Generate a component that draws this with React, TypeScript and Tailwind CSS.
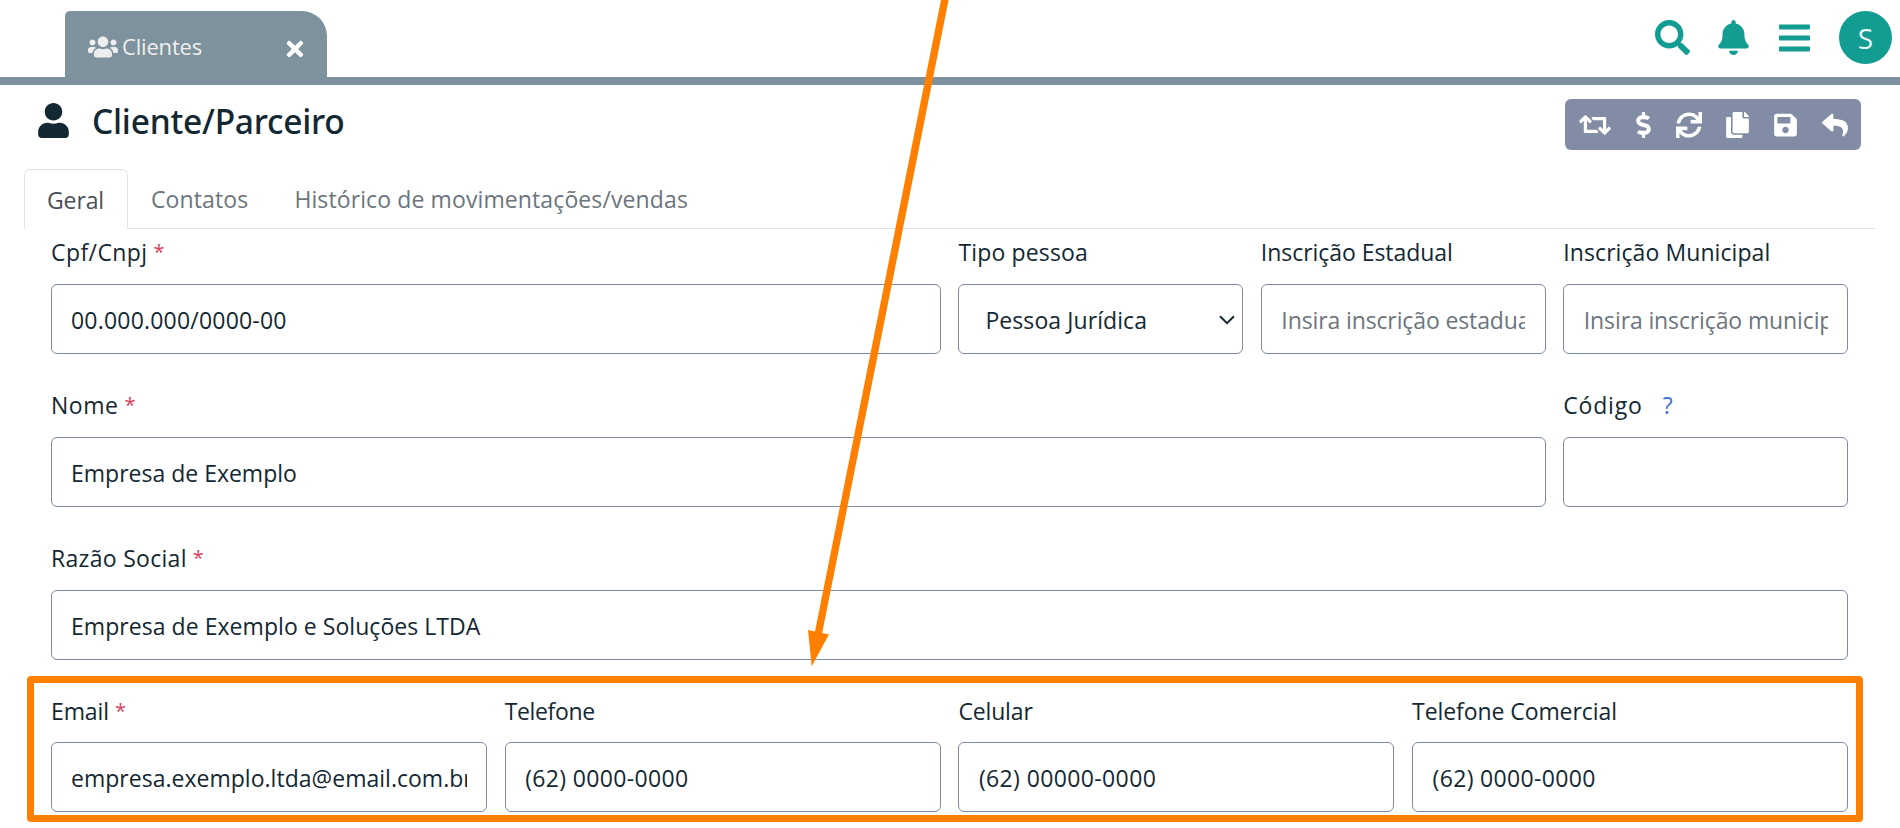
import React from "react";
import {
  FaBars,
  FaBell,
  FaCopy,
  FaDollarSign,
  FaReply,
  FaRetweet,
  FaSave,
  FaSearch,
  FaSync,
  FaTimes,
  FaUser,
  FaUsers,
} from "react-icons/fa";

const box =
  "block h-[70px] w-full rounded-md border border-[#7f8ba5] bg-white pt-[2px] text-[23px] text-[#142833] outline-none placeholder:text-[#6c757d] placeholder:opacity-100";

function Field({
  label,
  labelClass,
  required,
  help,
  span,
  last,
  children,
}: {
  label: string;
  labelClass: string;
  required?: boolean;
  help?: boolean;
  span: string;
  last?: boolean;
  children: React.ReactNode;
}) {
  return (
    <div className={`flex min-w-0 flex-col ${last ? "gap-[13px]" : "gap-[14px]"} ${span}`}>
      <label className="flex h-9 items-center whitespace-pre text-[23px] leading-9">
        <span className={labelClass}>{label}</span>
        {required && <span className="ml-[6px] text-[20px] text-[#dc3c5c]">*</span>}
        {help && <span className="ml-[20px] text-[#3f6fd9]">?</span>}
      </label>
      {children}
    </div>
  );
}

function Header() {
  return (
    <header className="flex h-[85px] justify-between border-b-8 border-[#7e929d]">
      <div className="ml-[65px] mt-[11px] flex h-[66px] w-[262px] items-center rounded-tl-[5px] rounded-tr-[25px] bg-[#7e929d] pl-[23px] pr-[20px] text-[#eeeeee]">
        <FaUsers className="mt-[5px] h-6 w-[30px] shrink-0" />
        <span className="ml-[4px] mt-[4px] text-[22px] leading-8 tracking-[-0.18px]">Clientes</span>
        <FaTimes className="ml-auto mt-[10px] h-6 w-6 text-white" />
      </div>
      <div className="flex h-[75px] items-center pr-[8px] text-[#139d92]">
        <FaSearch className="h-[35px] w-[35px]" />
        <FaBell className="ml-[28px] h-[35px] w-[31px]" />
        <FaBars className="ml-[30px] h-[36px] w-[31px]" />
        <span className="ml-[29px] flex h-[53px] w-[53px] items-center justify-center rounded-full bg-[#139d92] text-[28px] leading-none text-[#e9f5f4]">
          S
        </span>
      </div>
    </header>
  );
}

function Toolbar() {
  return (
    <div className="mt-[14px] flex h-[51px] w-[296px] items-center rounded-md bg-[#828da5] pl-[14px] text-white">
      <FaRetweet className="h-[26px] w-[32px]" />
      <FaDollarSign className="ml-[25px] h-[26px] w-[15px]" />
      <FaSync className="ml-[25px] h-[26px] w-[26px]" />
      <FaCopy className="ml-[24px] h-[26px] w-[23px]" />
      <FaSave className="ml-[25px] h-[26px] w-[23px]" />
      <FaReply className="ml-[25px] h-[26px] w-[26px]" />
    </div>
  );
}

export default function App() {
  return (
    <div className="relative h-[828px] w-[1900px] overflow-hidden bg-white font-['Open_Sans',sans-serif] text-[#142833]">
      <Header />

      <div className="flex h-[84px] justify-between pl-[38px] pr-[39px]">
        <div className="flex">
          <FaUser className="mt-[18px] h-[35px] w-[31px]" />
          <h1 className="ml-[23px] mt-[11px] font-['Noto_Sans',sans-serif] text-[33.5px] font-medium leading-[50px] tracking-[-0.24px]">
            Cliente/Parceiro
          </h1>
        </div>
        <Toolbar />
      </div>

      <nav className="ml-[24px] mr-[25px] flex h-[60px] border-b border-[#dee2e6] text-[23px] leading-[61px] text-[#6c757d]">
        <a className="h-[60px] w-[104px] rounded-t-md border border-b-0 border-[#dee2e6] bg-white pl-[22px] leading-[60px] tracking-[-0.13px] text-[#495057]">
          Geral
        </a>
        <a className="ml-[23px] tracking-[0.12px]">Contatos</a>
        <a className="ml-[46px] tracking-[0.11px]">Histórico de movimentações/vendas</a>
      </nav>

      <form className="ml-[51px] mt-[5px] grid w-[1797.2px] grid-cols-12 gap-x-[17.6px] gap-y-[33px]">
        <Field label="Cpf/Cnpj" labelClass="tracking-[0.42px]" required span="col-span-6">
          <input className={`${box} px-[19px] tracking-[0.2px]`} defaultValue="00.000.000/0000-00" />
        </Field>
        <Field label="Tipo pessoa" labelClass="tracking-[0.16px]" span="col-span-2">
          <div className="relative">
            <select className={`${box} appearance-none pl-[26px] pr-8 tracking-[0.08px]`}>
              <option>Pessoa Jurídica</option>
            </select>
            <svg
              className="pointer-events-none absolute right-[7px] top-[30px] h-[12px] w-[18px]"
              viewBox="0 0 18 12"
              fill="none"
              stroke="#142833"
              strokeWidth="2"
            >
              <path d="M2 2.2l7 7 7-7" />
            </svg>
          </div>
        </Field>
        <Field label="Inscrição Estadual" labelClass="tracking-[-0.05px]" span="col-span-2">
          <input className={`${box} px-[19.5px] tracking-[-0.12px]`} placeholder="Insira inscrição estadual" />
        </Field>
        <Field label="Inscrição Municipal" labelClass="tracking-[0.08px]" span="col-span-2">
          <input className={`${box} px-[19.5px] tracking-[-0.12px]`} placeholder="Insira inscrição municipal" />
        </Field>

        <Field label="Nome" labelClass="tracking-[0.5px]" required span="col-span-10">
          <input className={`${box} px-[19px]`} defaultValue="Empresa de Exemplo" />
        </Field>
        <Field label="Código" labelClass="tracking-[0.8px]" help span="col-span-2">
          <input className={`${box} px-[19px]`} />
        </Field>

        <Field label="Razão Social" labelClass="tracking-[0.3px]" required span="col-span-12">
          <input className={`${box} px-[19px] tracking-[0.05px]`} defaultValue="Empresa de Exemplo e Soluções LTDA" />
        </Field>

        <Field label="Email" labelClass="tracking-[-0.1px]" required span="col-span-3" last>
          <input className={`${box} px-[19px] tracking-[0.02px]`} defaultValue="empresa.exemplo.ltda@email.com.br" />
        </Field>
        <Field label="Telefone" labelClass="tracking-[-0.35px]" span="col-span-3" last>
          <input className={`${box} px-[19.5px] tracking-[0.34px]`} defaultValue="(62) 0000-0000" />
        </Field>
        <Field label="Celular" labelClass="tracking-[-0.15px]" span="col-span-3" last>
          <input className={`${box} px-[19.5px] tracking-[0.38px]`} defaultValue="(62) 00000-0000" />
        </Field>
        <Field label="Telefone Comercial" labelClass="tracking-[-0.08px]" span="col-span-3" last>
          <input className={`${box} px-[19.5px] tracking-[0.34px]`} defaultValue="(62) 0000-0000" />
        </Field>
      </form>

      <div className="pointer-events-none absolute left-[27px] top-[676px] h-[146px] w-[1836px] rounded-[4px] border-[7px] border-[#ff8000]" />
      <svg
        className="pointer-events-none absolute left-[780px] top-0 h-[680px] w-[200px]"
        viewBox="780 0 200 680"
        fill="#ff8000"
      >
        <path d="M941 0L948.6 0L822.2 633L829 634.4L811.7 666.3L808 630L815 631.6Z" />
      </svg>
    </div>
  );
}
